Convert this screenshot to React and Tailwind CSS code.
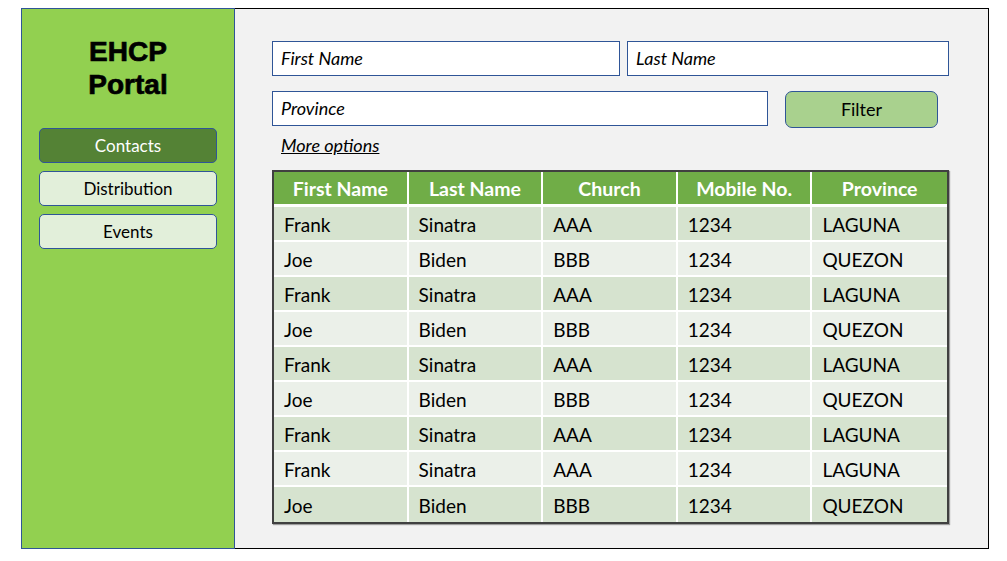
import React from 'react'

const FONT = "font-['Lato','Open_Sans',sans-serif]"

const ROWS = [
  ['Frank', 'Sinatra', 'AAA', '1234', 'LAGUNA'],
  ['Joe', 'Biden', 'BBB', '1234', 'QUEZON'],
  ['Frank', 'Sinatra', 'AAA', '1234', 'LAGUNA'],
  ['Joe', 'Biden', 'BBB', '1234', 'QUEZON'],
  ['Frank', 'Sinatra', 'AAA', '1234', 'LAGUNA'],
  ['Joe', 'Biden', 'BBB', '1234', 'QUEZON'],
  ['Frank', 'Sinatra', 'AAA', '1234', 'LAGUNA'],
  ['Frank', 'Sinatra', 'AAA', '1234', 'LAGUNA'],
  ['Joe', 'Biden', 'BBB', '1234', 'QUEZON'],
]

const HEADERS = ['First Name', 'Last Name', 'Church', 'Mobile No.', 'Province']

function NavButton({ label, active }) {
  return (
    <div
      className={
        'h-[35px] w-[178px] rounded-[5px] border border-[#2f5597] flex items-center justify-center text-[17px] ' +
        (active ? 'bg-[#548235] text-white' : 'bg-[#e2efda] text-black')
      }
    >
      {label}
    </div>
  )
}

function Field({ label, width }) {
  return (
    <div className={'h-[35px] bg-white border border-[#2f5597] flex items-center pl-[8px] italic text-[18px] text-black ' + width}>
      {label}
    </div>
  )
}

export default function App() {
  return (
    <div className={'w-[1007px] h-[561px] bg-white pt-[8px] pl-[21px] ' + FONT}>
      <div className="flex h-[541px]">
        {/* sidebar */}
        <aside className="w-[214px] h-full bg-[#92d050] border border-[#2f5597] flex flex-col items-center pt-[26px]">
          <h1 className="font-['Liberation_Sans',Arial,sans-serif] font-bold text-[28px] leading-[33px] text-center text-black [-webkit-text-stroke:0.7px_black]">
            EHCP
            <br />
            Portal
          </h1>
          <nav className="mt-[27px] flex flex-col gap-[8px]">
            <NavButton label="Contacts" active />
            <NavButton label="Distribution" />
            <NavButton label="Events" />
          </nav>
        </aside>

        {/* main */}
        <main className="w-[754px] h-full bg-[#f2f2f2] border-t border-r border-b border-black pt-[32px] pl-[37px]">
          <div className="flex gap-[7px]">
            <Field label="First Name" width="w-[348px]" />
            <Field label="Last Name" width="w-[322px]" />
          </div>
          <div className="flex mt-[15px] items-start">
            <Field label="Province" width="w-[496px]" />
            <button className="ml-[17px] w-[153px] h-[37px] rounded-[7px] bg-[#a9d18e] border border-[#2f5597] text-[18px] text-black">
              Filter
            </button>
          </div>
          <div className="mt-[5px] pl-[9px] text-[18px] italic underline leading-[24px] text-black">More options</div>

          <div className="mt-[13px] w-[677px] border-2 border-[#404040] shadow-[1px_1px_1px_rgba(0,0,0,0.35)]">
            <div className="grid grid-cols-5 h-[35px] bg-[#70ad47] border-b-[3px] border-white">
              {HEADERS.map((h, i) => (
                <div
                  key={h}
                  className={'flex items-center justify-center pt-[2px] font-bold text-[19.5px] text-white ' + (i < 4 ? 'border-r-2 border-white' : '')}
                >
                  {h}
                </div>
              ))}
            </div>
            {ROWS.map((r, ri) => (
              <div
                key={ri}
                className={
                  'grid grid-cols-5 h-[35px] ' +
                  (ri % 2 === 0 ? 'bg-[#d6e3cf] ' : 'bg-[#ebf0e9] ') +
                  (ri < ROWS.length - 1 ? 'border-b-2 border-white' : '')
                }
              >
                {r.map((c, ci) => (
                  <div
                    key={ci}
                    className={'flex items-center pl-[10px] pt-[3px] text-[19px] text-black ' + (ci < 4 ? 'border-r-2 border-white' : '')}
                  >
                    {c}
                  </div>
                ))}
              </div>
            ))}
          </div>
        </main>
      </div>
    </div>
  )
}
